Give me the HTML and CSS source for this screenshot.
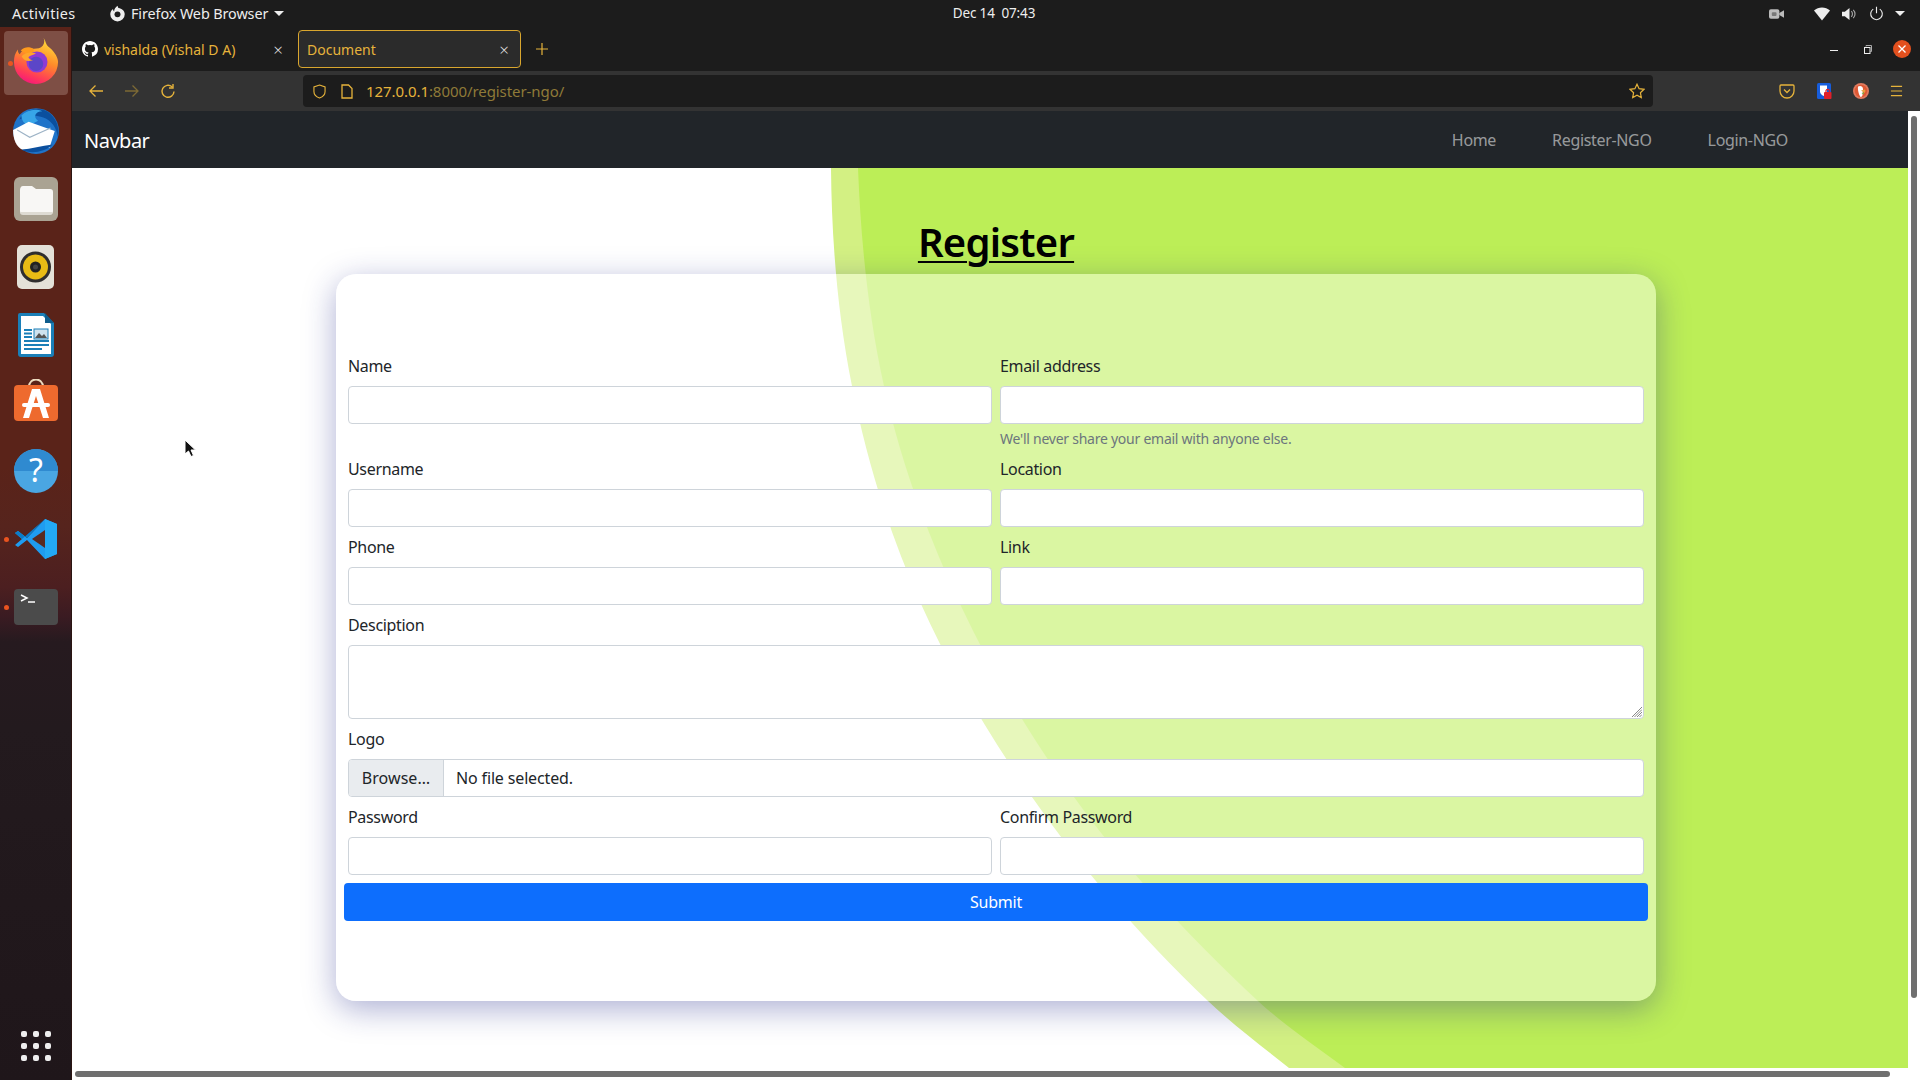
FILE: index.html
```html
<!DOCTYPE html>
<html lang="en">
<head>
<meta charset="utf-8">
<title>Document</title>
<link rel="stylesheet" href="styles.css">
</head>
<body>
<header class="topbar">
  <span class="activities">Activities</span>
  <svg class="ff-mono" viewBox="0 0 16 16"><path d="M8 .6c.5 1 .2 1.600 1 2.200 2.900.4 5.800 2.600 5.800 5.900A6.800 6.800 0 0 1 1.200 8.700C1.200 6.700 2.200 5 3.800 3.800c0 1 .3 1.700 1 2.200.1-2.200 1.300-4 3.200-5.400z" fill="#eee"/><circle cx="8" cy="8.800" r="2.800" fill="#1c1c1c"/></svg>
  <span class="appname">Firefox Web Browser</span>
  <span class="caret"></span>
  <span class="clock">Dec 14&nbsp; 07:43</span>
  <div class="tray">
    <svg class="t-cam" viewBox="0 0 16 12"><rect x="0" y="1" width="11" height="10" rx="2" fill="#bbb"/><rect x="3" y="4" width="5" height="4" rx="1" fill="#777"/><path d="M11 5l5-3v8l-5-3z" fill="#bbb"/></svg>
    <svg class="t-wifi" viewBox="0 0 16 14"><path d="M0 3.500C4.500-.5 11.500-.5 16 3.500L8 13.500z" fill="#eee"/></svg>
    <svg class="t-vol" viewBox="0 0 16 14"><path d="M0 4.500h3L8 .5v13l-5-4H0z" fill="#eee"/><path d="M10 4c1.500 1.500 1.500 4.500 0 6M12 2.500c2.500 2.500 2.500 6.500 0 9" fill="none" stroke="#aaa" stroke-width="1.200"/></svg>
    <svg class="t-pow" viewBox="0 0 16 16"><path d="M4.500 3.300a6.200 6.200 0 1 0 7 0M8 .8v7" fill="none" stroke="#eee" stroke-width="1.200"/></svg>
    <span class="caret"></span>
  </div>
</header>

<div class="desktop">
  <nav class="dock">
    <div class="dock-active">
      <span class="run-dot"></span>
      <svg class="ico-ff" viewBox="0 0 48 48">
        <defs>
          <linearGradient id="ffa" x1="0.7" y1="0" x2="0.3" y2="1"><stop offset="0" stop-color="#ffde3a"/><stop offset=".45" stop-color="#ff8a2a"/><stop offset=".8" stop-color="#ff3b58"/><stop offset="1" stop-color="#f5157e"/></linearGradient>
        </defs>
        <path d="M32 0c3 5 2 7 6 10 6 5 9 11 9 15a23 23 0 0 1-46 0c0-5 1-9 4-13 0 3 1 4 2 5 2-4 6-6 9-6 6 0 12 1 15-3 2-3 2-5 1-8z" fill="url(#ffa)"/>
        <path d="M8 13c3-3 7-4 10-3 5 1 4 4 2 6l-7 3c2 2 7 2 9-1l-9-2z" fill="#ff9a1e"/>
        <circle cx="25" cy="25" r="11" fill="#8e3bd4"/>
        <circle cx="24" cy="27" r="7.500" fill="#5b46c8"/>
        <path d="M9 19c3-4 10-5 15-3-3 2-6 2-8 4 1 2 3 3 5 3-5 2-10 1-12-4z" fill="#ffa52b"/>
      </svg>
    </div>
    <svg class="ico-tb" viewBox="0 0 48 48">
      <circle cx="24" cy="25" r="22" fill="#1f73c9"/>
      <path d="M8 14C13 4 27 1 36 7c7 5 11 14 9 24-1-9-6-16-14-19-8-3-16-2-23 2z" fill="#0b4f9e"/>
      <path d="M10 10c5-5 13-7 20-4-7 0-9 6-4 9l-9 5c-4-2-7-5-7-10z" fill="#37a5e8"/>
      <path d="M2 24l15-8 25 9-5 16-26 2C5 40 2 33 2 24z" fill="#fff"/>
      <path d="M6 24l12 7 20-9" fill="none" stroke="#9db3c6" stroke-width="1"/>
      <path d="M10 43c8 4 22 3 30-5l-8 1-15 3z" fill="#0b4f9e"/>
    </svg>
    <svg class="ico-files" viewBox="0 0 44 44">
      <rect width="44" height="44" rx="6" fill="#aaa393"/>
      <path d="M6 13c0-2 1-4 3-4h9l4 3h14c2 0 3 1 3 3v19c0 2-1 3-3 3H9c-2 0-3-1-3-3z" fill="#f8f7f5"/>
      <path d="M6 35h33c0 1-1 3-3 3H9c-2 0-3-1-3-3z" fill="#dedbd3"/>
    </svg>
    <svg class="ico-rhythm" viewBox="0 0 37 44">
      <rect width="37" height="44" rx="5" fill="#e4e1d8"/>
      <circle cx="18.500" cy="22" r="15.500" fill="#2f2e2e"/>
      <circle cx="18.500" cy="22" r="12.500" fill="#e8bb15"/>
      <circle cx="18.500" cy="22" r="5.500" fill="#222"/>
      <circle cx="18.500" cy="22" r="2.500" fill="#444"/>
    </svg>
    <svg class="ico-writer" viewBox="0 0 36 44">
      <path d="M2 0h24l10 10v31a3 3 0 0 1-3 3H3a3 3 0 0 1-3-3V2a2 2 0 0 1 2-2z" fill="#1a7fb8"/>
      <path d="M3 3h22l8 8v30H3z" fill="#fff"/>
      <path d="M27 0l9 10h-9z" fill="#0f5d8c"/>
      <path d="M6 17h8M6 20.500h8M6 24h8M6 28h25M6 32h25M6 36h18" stroke="#1a7fb8" stroke-width="2"/>
      <rect x="16" y="16" width="14" height="10" fill="#cfe3ef" stroke="#1a7fb8"/>
      <path d="M17 25l4-5 3 3 2-2 3 4z" fill="#555"/>
    </svg>
    <svg class="ico-store" viewBox="0 0 44 42">
      <path d="M15 8c0-10 14-10 14 0" fill="none" stroke="#ecdcc0" stroke-width="2"/>
      <rect y="6" width="44" height="36" rx="4" fill="#ee6a2e"/>
      <path d="M18 10h8l9 29h-6l-7-22-7 22H9z" fill="#fff"/>
      <rect x="8" y="24" width="28" height="4" rx="2" fill="#fff"/>
    </svg>
    <svg class="ico-help" viewBox="0 0 44 44">
      <circle cx="22" cy="22" r="22" fill="#4aa6e2"/>
      <path d="M0 22a22 22 0 0 1 44 0z" fill="#2f8ad0"/>
      <text x="22" y="33" class="help-q">?</text>
    </svg>
    <div class="dock-row">
      <span class="run-dot"></span>
      <svg class="ico-vs" viewBox="0 0 42 42">
        <path d="M30 1L12 20 3 13 0 15l7 6-7 6 3 2 9-7 18 19 12-5V6z" fill="#1f9cf0"/>
        <path d="M30 1l12 5v30l-12 5z" fill="#23a9f5"/>
        <path d="M30 12L17 21l13 9z" fill="#5a2a20"/>
        <path d="M30 1L12 20 3 13 0 15l7 6z" fill="#0a7cc8"/>
      </svg>
    </div>
    <div class="dock-row term-row">
      <span class="run-dot"></span>
      <svg class="ico-term" viewBox="0 0 44 36">
        <rect width="44" height="36" rx="4" fill="#4b4b4b"/>
        <path d="M7 6l6 3-6 3" fill="none" stroke="#fff" stroke-width="1.500"/>
        <path d="M14 13h7" stroke="#fff" stroke-width="1.500"/>
      </svg>
    </div>
    <div class="appgrid">
      <i></i><i></i><i></i><i></i><i></i><i></i><i></i><i></i><i></i>
    </div>
  </nav>

  <main class="browser">
    <div class="tabbar">
      <div class="tab tab-gh">
        <svg class="gh" viewBox="0 0 16 16"><path fill="#fff" d="M8 0C3.580 0 0 3.580 0 8c0 3.540 2.290 6.530 5.470 7.590.4.070.55-.17.55-.38v-1.340c-2.230.49-2.690-1.070-2.690-1.070-.36-.92-.89-1.170-.89-1.170-.73-.5.050-.49.050-.49.800.060 1.230.830 1.230.830.710 1.220 1.870.870 2.330.660.070-.520.280-.870.510-1.070-1.780-.2-3.640-.890-3.640-3.950 0-.870.310-1.590.820-2.150-.080-.2-.360-1.020.080-2.120 0 0 .670-.210 2.200.820a7.600 7.600 0 0 1 4 0c1.530-1.040 2.200-.820 2.200-.820.440 1.100.160 1.920.080 2.120.510.560.820 1.270.820 2.150 0 3.070-1.870 3.750-3.650 3.950.290.250.540.730.540 1.480v2.200c0 .210.150.460.550.380A8 8 0 0 0 16 8c0-4.420-3.580-8-8-8z"/></svg>
        <span class="tab-title">vishalda (Vishal D A)</span>
        <span class="tab-x">×</span>
      </div>
      <div class="tab tab-active">
        <span class="tab-title">Document</span>
        <span class="tab-x">×</span>
      </div>
      <svg class="plus" viewBox="0 0 12 12"><path d="M6 0v12M0 6h12" stroke="#e6b33b" stroke-width="1.200"/></svg>
      <div class="winctl">
        <span class="w-min"></span>
        <svg class="w-max" viewBox="0 0 8 9"><path d="M2 1.500V.5h5.500v6H6.500" fill="none" stroke="#aaa"/><rect x=".5" y="2.500" width="5.500" height="6" fill="none" stroke="#eee"/></svg>
        <svg class="w-close" viewBox="0 0 18 18"><circle cx="9" cy="9" r="9" fill="#e2501e"/><path d="M5.500 5.500l7 7M12.500 5.500l-7 7" stroke="#fff" stroke-width="1.300"/></svg>
      </div>
    </div>

    <div class="toolbar">
      <svg class="tb-btn" viewBox="0 0 16 16"><path d="M15 8H2M7.500 2.500L2 8l5.500 5.500" fill="none" stroke="#e6b33b" stroke-width="1.300"/></svg>
      <svg class="tb-btn tb-dim" viewBox="0 0 16 16"><path d="M1 8h13M8.500 2.500L14 8l-5.500 5.500" fill="none" stroke="#7d6a35" stroke-width="1.300"/></svg>
      <svg class="tb-btn" viewBox="0 0 16 16"><path d="M14 8.500A6 6 0 1 1 12 3.800M13 1v4H9" fill="none" stroke="#e6b33b" stroke-width="1.400"/></svg>
      <div class="urlbar">
        <svg class="shield" viewBox="0 0 14 16"><path d="M7 1l6 2v5c0 3.500-3 6-6 7-3-1-6-3.500-6-7V3z" fill="none" stroke="#e6b33b" stroke-width="1.200"/></svg>
        <svg class="pageic" viewBox="0 0 12 15"><path d="M1 1h6.500L11 4.500V14H1z" fill="none" stroke="#e6b33b" stroke-width="1.300"/></svg>
        <span class="url"><b>127.0.0.1</b>:8000/register-ngo/</span>
        <svg class="star" viewBox="0 0 16 16"><path d="M8 1.200l2.100 4.500 4.900.6-3.600 3.400.9 4.900L8 12.200l-4.300 2.400.9-4.900L1 6.300l4.900-.6z" fill="none" stroke="#e6b33b" stroke-width="1.200"/></svg>
      </div>
      <div class="extensions">
        <svg class="ext" viewBox="0 0 16 16"><path d="M2 2h12a1 1 0 0 1 1 1v5a7 7 0 0 1-14 0V3a1 1 0 0 1 1-1z" fill="none" stroke="#e6b33b" stroke-width="1.300"/><path d="M5 6.500l3 3 3-3" fill="none" stroke="#e6b33b" stroke-width="1.300"/></svg>
        <svg class="ext" viewBox="0 0 16 16"><rect x="1" width="14" height="16" rx="1.500" fill="#175ddc"/><path d="M4 2.500h7v6c0 2-2 3.500-3.500 4.500C6 12 4 10.500 4 8.500z" fill="#fff"/><rect x="8" y="9" width="7.500" height="7" rx="1" fill="#e0202a"/><path d="M10 9V7.500a2 2 0 0 1 3.500 0V9" fill="none" stroke="#e0202a" stroke-width="1.200"/></svg>
        <svg class="ext" viewBox="0 0 16 16"><circle cx="8" cy="8" r="8" fill="#e07a5f"/><circle cx="8" cy="8" r="6.300" fill="#de5833"/><path d="M5 3.500c2.500-1.500 5 0 5 2.500 0 2.500-.5 4-.5 6 0 1-1 2-2 2-1.500-2-3-7-2.500-10.500z" fill="#fff"/><path d="M8 7.500l4-1 .5 1.500-1 2z" fill="#e9a13b"/><path d="M8.500 10l2.500-.5-.5 2z" fill="#65bc46"/></svg>
        <svg class="ext ext-menu" viewBox="0 0 14 12"><path d="M1 1h12M1 6h12M1 11h12" stroke="#e6b33b" stroke-width="1.300"/></svg>
      </div>
    </div>

    <div class="viewport">
      <div class="navbar">
        <a class="brand">Navbar</a>
        <div class="navlinks">
          <a class="navlink">Home</a>
          <a class="navlink">Register-NGO</a>
          <a class="navlink">Login-NGO</a>
        </div>
      </div>

      <div class="page">
        <svg class="blob" viewBox="72 168 1836 900" preserveAspectRatio="none">
          <path class="blob-outer" d="M831 168C831.700 240.700 837.500 313.300 852 386C866.500 458.700 888.300 531.300 921 604C950 668.300 987 732.700 1032 797C1079.600 865 1136.600 933 1208 1001C1231.500 1023.300 1261.100 1045.700 1289 1068H1908V168Z"/>
          <path class="blob-inner" d="M858 168C860.900 240.700 868 313.300 884 386C900 458.700 925.800 531.300 960 604C990.200 668.300 1027.700 732.700 1074 797C1123 865 1185.200 933 1258 1001C1281.900 1023.300 1314.800 1045.700 1345 1068H1908V168Z"/>
        </svg>
        <h1 class="title">Register</h1>
        <section class="card">
          <form class="form">
            <div class="field half"><label>Name</label><div class="input"></div></div>
            <div class="field half"><label>Email address</label><div class="input"></div><small class="help">We'll never share your email with anyone else.</small></div>
            <div class="field half"><label>Username</label><div class="input"></div></div>
            <div class="field half"><label>Location</label><div class="input"></div></div>
            <div class="field half"><label>Phone</label><div class="input"></div></div>
            <div class="field half"><label>Link</label><div class="input"></div></div>
            <div class="field full"><label>Desciption</label>
              <div class="input textarea"><svg class="grip" viewBox="0 0 10 10"><path d="M10 0L0 10M10 2.500L2.500 10M10 5L5 10M10 7.500L7.500 10" stroke="#888" fill="none"/></svg></div>
            </div>
            <div class="field full"><label>Logo</label>
              <div class="input file"><span class="browse">Browse…</span><span class="nofile">No file selected.</span></div>
            </div>
            <div class="field half"><label>Password</label><div class="input"></div></div>
            <div class="field half"><label>Confirm Password</label><div class="input"></div></div>
            <div class="submit">Submit</div>
          </form>
        </section>
      </div>
      <div class="hbar-row"><span class="hbar"></span></div>
      <span class="vbar"></span>
      <svg class="cursor" viewBox="0 0 12 18"><path d="M1 1v14l3.500-3 2.500 5.500 2.500-1L7 11h4.500z" fill="#111" stroke="#fff" stroke-width="1"/></svg>
    </div>
  </main>
</div>
</body>
</html>
```

FILE: styles.css
```css
* { box-sizing: border-box; }
html, body { margin: 0; height: 100%; overflow: hidden; }
body {
  width: 1920px; height: 1080px;
  font-family: "Noto Sans", "Open Sans", sans-serif;
  background: #1c1c1c;
  display: flex; flex-direction: column;
}

/* GNOME top bar */
.topbar {
  height: 27px; flex: none; background: #1c1c1c; color: #eee;
  font-size: 14.400px; letter-spacing: -.1px;
  display: flex; align-items: center; padding-left: 12px;
  position: relative;
}
.activities { width: 97px; letter-spacing: .35px; }
.ff-mono { width: 17px; height: 17px; margin-right: 5px; }
.appname { width: 143px; }
.caret {
  width: 0; height: 0; border-left: 5px solid transparent; border-right: 5px solid transparent;
  border-top: 5px solid #eee;
}
.clock { margin-left: 665px; margin-top: -2px; width: 90px; font-size: 13.500px; letter-spacing: -.15px; white-space: nowrap; text-align: center; }
.tray { margin-left: auto; display: flex; align-items: center; padding-right: 15px; }
.t-cam { width: 15px; height: 12px; margin-right: 30px; }
.t-wifi { width: 16px; height: 14px; margin-right: 12px; }
.t-vol { width: 15px; height: 14px; margin-right: 12px; }
.t-pow { width: 15px; height: 15px; margin-right: 11px; }

.desktop { flex: 1; display: flex; min-height: 0; }

/* Ubuntu dock */
.dock {
  width: 72px; flex: none;
  background: linear-gradient(180deg, #5a2319 0, #5a2319 440px, #56241d 500px, #4c1f20 560px, #3a1b22 590px, #261a1f 615px, #231a1e 700px, #1f161a 1053px);
  border-right: 1px solid #2a1512;
  display: flex; flex-direction: column; align-items: center;
  padding-top: 4px;
}
.dock-active {
  width: 64px; height: 64px; border-radius: 4px; background: #7e4f45;
  display: flex; align-items: center; justify-content: center; position: relative;
}
.run-dot { width: 5px; height: 5px; border-radius: 50%; background: #e95420; position: absolute; left: 4px; top: 30px; }
.ico-ff { width: 46px; height: 46px; margin-top: -5px; }
.ico-tb { width: 50px; height: 50px; margin-top: 10px; }
.ico-files { width: 44px; height: 44px; margin-top: 22px; }
.ico-rhythm { width: 37px; height: 44px; margin-top: 24px; }
.ico-writer { width: 36px; height: 44px; margin-top: 24px; }
.ico-store { width: 44px; height: 42px; margin-top: 22px; }
.ico-help { width: 44px; height: 44px; margin-top: 28px; }
.dock-row { width: 72px; display: flex; justify-content: center; position: relative; margin-top: 25px; }
.dock-row .run-dot { top: 19px; }
.ico-vs { width: 42px; height: 42px; display: block; }
.term-row { margin-top: 29px; }
.term-row .run-dot { top: 16px; }
.ico-term { width: 44px; height: 36px; display: block; }
.appgrid {
  margin-top: auto; margin-bottom: 19px;
  display: grid; grid-template-columns: repeat(3, 6px); gap: 6px;
}
.appgrid i { width: 6px; height: 6px; border-radius: 2px; background: #eee; display: block; }

/* Firefox */
.browser { flex: 1; min-width: 0; display: flex; flex-direction: column; }
.tabbar { height: 44px; flex: none; background: #1c1c1c; display: flex; align-items: center; color: #e6b33b; font-size: 14px; }
.tab { height: 38px; display: flex; align-items: center; border-radius: 4px; }
.tab-gh { width: 226px; padding-left: 10px; }
.gh { width: 16px; height: 16px; margin-right: 6px; }
.tab-active { width: 223px; padding-left: 8px; background: #2b2b2b; border: 1px solid #d9a62e; }
.tab-title { flex: 1; white-space: nowrap; }
.tab-x { width: 24px; color: #ddd; font-size: 17px; text-align: center; font-weight: 300; }
.tab-gh .tab-x { margin-right: 8px; }
.tab-active .tab-x { margin-right: 4px; }
.plus { width: 12px; height: 12px; margin-left: 15px; }
.winctl { margin-left: auto; display: flex; align-items: center; padding-right: 9px; }
.w-min { width: 8px; height: 1.500px; background: #eee; margin-right: 26px; margin-top: 3px; }
.w-max { width: 8px; height: 9px; margin-right: 21px; }
.w-close { width: 18px; height: 18px; }

.toolbar { height: 40px; flex: none; background: #333; display: flex; align-items: center; padding-left: 16px; }
.tb-btn { width: 16px; height: 16px; margin-right: 20px; flex: none; }
.urlbar {
  flex: none;
  margin-left: 107px; width: 1350px; height: 32px; background: #1c1c1c; border-radius: 4px;
  display: flex; align-items: center; padding-left: 10px;
}
.shield { width: 13px; height: 15px; margin-right: 15px; }
.pageic { width: 12px; height: 15px; margin-right: 13px; }
.url { font-size: 15px; letter-spacing: -.07px; color: #8f7a38; white-space: nowrap; }
.url b { color: #e6b33b; font-weight: 400; }
.star { width: 16px; height: 16px; margin-left: auto; margin-right: 8px; }
.extensions { display: flex; align-items: center; padding-left: 126px; }
.ext { width: 16px; height: 16px; margin-right: 21px; flex: none; }
.ext-menu { width: 13px; height: 12px; margin-right: 0; }

/* page */
.viewport { flex: 1; position: relative; background: #fff; min-height: 0; display: flex; flex-direction: column; overflow: hidden; }
.navbar {
  height: 57px; flex: none; background: #212529; margin-right: 12px;
  display: flex; align-items: center; padding-left: 12px; padding-right: 120px;
}
.brand { color: #fff; font-size: 20px; letter-spacing: -.5px; margin-top: 1px; }
.navlinks { margin-left: auto; display: flex; gap: 56px; }
.navlink { color: rgba(255,255,255,.55); font-size: 16px; letter-spacing: -.33px; }

.page { position: relative; height: 900px; margin-right: 12px; display: flex; flex-direction: column; align-items: center; padding-top: 50px; overflow: visible; }
.blob { position: absolute; left: 0; top: 0; width: 1836px; height: 900px; }
.blob-outer { fill: #d3f083; }
.blob-inner { fill: #bcee57; }
.title {
  position: relative; margin: 0 0 8px; font-size: 40px; line-height: 48px; font-weight: 600;
  text-decoration: underline; text-decoration-thickness: 1.500px; text-underline-offset: 4px;
  color: #000; letter-spacing: -.75px; width: 1320px; text-align: center; transform: translateX(6px);
}
.card {
  position: relative; width: 1320px; height: 727px; padding: 80px 8px;
  transform: translateX(6px);
  background: rgba(255,255,255,.45); border-radius: 20px;
  box-shadow: 0 8px 32px 0 rgba(31,38,135,.37);
}
.form { display: flex; flex-wrap: wrap; row-gap: 8px; }
.field { padding: 0 4px; color: #212529; font-size: 16px; letter-spacing: -.33px; }
.half { width: 50%; }
.full { width: 100%; }
.field label { display: block; line-height: 24px; margin-bottom: 8px; }
.input { height: 38px; background: #fff; border: 1px solid #ced4da; border-radius: 4px; }
.help { display: block; font-size: 14px; line-height: 21px; margin-top: 4px; color: #6c757d; letter-spacing: -.25px; }
.textarea { height: 74px; position: relative; }
.grip { position: absolute; right: 1px; bottom: 1px; width: 10px; height: 10px; }
.file { display: flex; align-items: center; overflow: hidden; line-height: 24px; }
.browse { width: 95px; height: 100%; flex: none; background: #e9ecef; border-right: 1px solid #ced4da; display: flex; align-items: center; justify-content: center; letter-spacing: .05px; }
.nofile { margin-left: 12px; letter-spacing: -.15px; }
.submit { width: 100%; height: 38px; background: #0d6efd; color: #fff; border-radius: 4px; display: flex; align-items: center; justify-content: center; font-size: 16px; letter-spacing: -.25px; }

.hbar-row { flex: 1; padding: 3px 0 0 3px; background: #fff; }
.hbar { display: block; width: 1815px; height: 6px; border-radius: 3px; background: #6f6f6f; }
.vbar { position: absolute; right: 3px; top: 5px; width: 6px; height: 882px; border-radius: 3px; background: #6f6f6f; }
.cursor { position: absolute; left: 112px; top: 328px; width: 12px; height: 18px; }
.help-q { font-family: "Noto Sans", sans-serif; font-size: 32px; fill: #fff; text-anchor: middle; }
```
